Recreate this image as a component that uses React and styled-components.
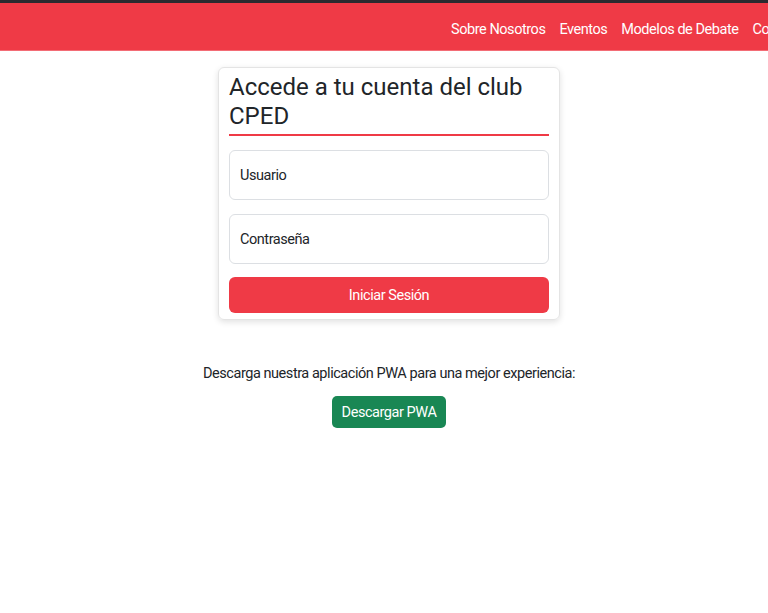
import React from 'react';
import styled, { createGlobalStyle } from 'styled-components';

const GlobalStyle = createGlobalStyle`
  body {
    margin: 0;
    background: #fff;
    font-family: 'Roboto', 'Open Sans', sans-serif;
    color: #212529;
    letter-spacing: -0.45px;
  }
`;

const TopStrip = styled.div`
  height: 3px;
  background-color: #2b2a2f;
`;

const NavBar = styled.nav`
  height: 47px;
  background-color: #ef3a46;
  border-bottom: 1px solid #f36d76;
  display: flex;
  align-items: center;
  overflow: hidden;
`;

const NavList = styled.ul`
  list-style: none;
  margin: 0;
  padding: 0 0 0 451px;
  display: flex;
  gap: 14px;
  flex-shrink: 0;
  white-space: nowrap;
`;

const NavItem = styled.li`
  color: #fff;
  font-size: 14.5px;
  padding-top: 6px;
`;

const Main = styled.main`
  display: flex;
  flex-direction: column;
  align-items: center;
  padding-left: 10px;
  padding-top: 16px;
`;

const Card = styled.div`
  width: 342px;
  box-sizing: border-box;
  border: 1px solid #e4e4e4;
  border-radius: 6px;
  box-shadow: 0 2px 6px rgba(0, 0, 0, 0.12);
  padding: 5px 10px 6px;
  display: flex;
  flex-direction: column;
`;

const Title = styled.h2`
  margin: 0;
  font-size: 24px;
  font-weight: 400;
  letter-spacing: 0;
  line-height: 29px;
  padding-bottom: 3px;
  border-bottom: 2px solid #ef3a46;
`;

const Field = styled.input`
  box-sizing: border-box;
  height: 50px;
  margin-top: 14px;
  border: 1px solid #dcdfe3;
  border-radius: 6px;
  padding: 0 10px;
  font-family: inherit;
  font-size: 14.5px;
  letter-spacing: -0.45px;
  color: #212529;
  outline: none;

  &::placeholder {
    color: #212529;
    opacity: 1;
  }
`;

const LoginButton = styled.button`
  height: 36px;
  margin-top: 13px;
  border: none;
  border-radius: 6px;
  background-color: #ef3a46;
  color: #fff;
  font-family: inherit;
  font-size: 14.5px;
  letter-spacing: -0.45px;
`;

const PwaText = styled.p`
  margin: 43px 0 0;
  font-size: 14.5px;
  line-height: 22px;
`;

const PwaButton = styled.button`
  margin-top: 11px;
  height: 32px;
  padding: 0 10px;
  border: none;
  border-radius: 5px;
  background-color: #198754;
  color: #fff;
  font-family: inherit;
  font-size: 14.5px;
  letter-spacing: -0.45px;
`;

export default function App() {
  return (
    <>
      <GlobalStyle />
      <TopStrip />
      <NavBar>
        <NavList>
          <NavItem>Sobre Nosotros</NavItem>
          <NavItem>Eventos</NavItem>
          <NavItem>Modelos de Debate</NavItem>
          <NavItem>Contacto</NavItem>
        </NavList>
      </NavBar>
      <Main>
        <Card>
          <Title>Accede a tu cuenta del club CPED</Title>
          <Field placeholder="Usuario" />
          <Field type="password" placeholder="Contraseña" />
          <LoginButton>Iniciar Sesión</LoginButton>
        </Card>
        <PwaText>Descarga nuestra aplicación PWA para una mejor experiencia:</PwaText>
        <PwaButton>Descargar PWA</PwaButton>
      </Main>
    </>
  );
}
